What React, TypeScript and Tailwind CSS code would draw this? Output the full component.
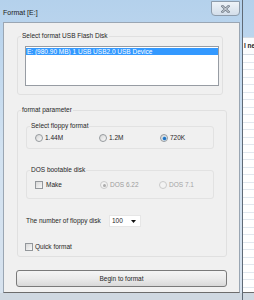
import React from "react";

function Radio({ checked = false, disabled = false }: { checked?: boolean; disabled?: boolean }) {
  return (
    <span
      className={`relative inline-block w-[8px] h-[8px] shrink-0 rounded-full border ${
        disabled
          ? "border-[#cacaca] bg-[#f3f3f3]"
          : "border-[#969a9e] bg-gradient-to-br from-[#d6d6d6] to-[#fbfbfb]"
      }`}
    >
      {checked && (
        <span
          className={`absolute left-[1.5px] top-[1.5px] w-[3px] h-[3px] rounded-full ${
            disabled ? "bg-[#ababab]" : "bg-[#1f6fbf] shadow-[0_0_0_0.5px_#5aa7e6]"
          }`}
        />
      )}
    </span>
  );
}

function Check() {
  return (
    <span className="inline-block w-[8px] h-[8px] shrink-0 border border-[#93979b] bg-gradient-to-br from-[#d8d8d8] to-[#f9f9f9]" />
  );
}

export default function App() {
  const rows = Array.from({ length: 32 });
  return (
    <div className="w-[254px] h-[300px] overflow-hidden flex bg-gradient-to-b from-[#b4d1ec] via-[#d2e2f1] to-[#d7e2ee] font-['Liberation_Sans',Arial,sans-serif] text-[6.5px] leading-[8px] text-[#262626]">
      {/* dialog */}
      <div className="w-[244px] h-full flex flex-col border-r border-[#5f6a76]">
        {/* title bar */}
        <div className="h-[22px] flex items-start justify-between pl-[3px] pr-[2px]">
          <span className="mt-[9px] text-[7px] leading-[8px] text-[#1a1a1a]">Format [E:]</span>
          <div className="w-[29px] h-[15px] mt-[1px] rounded-b-[4px] border border-[#8d9cac] bg-gradient-to-b from-[#eef3f8] to-[#d3deea] flex items-center justify-center">
            <svg width="9" height="8" viewBox="0 0 9 8">
              <path d="M1.5 1.2 L7.5 6.8 M7.5 1.2 L1.5 6.8" stroke="#6f7a87" strokeWidth="2.4" strokeLinecap="square" />
              <path d="M1.5 1.2 L7.5 6.8 M7.5 1.2 L1.5 6.8" stroke="#eef2f6" strokeWidth="0.9" strokeLinecap="square" />
            </svg>
          </div>
        </div>
        {/* body */}
        <div className="flex-1 flex pl-[3px] pr-[2px]">
          <div className="flex-1 flex flex-col bg-[#f0f0f0] border border-[#9aa6b3] border-b-[#6c6c6c] px-[12px]">
            {/* group 1 */}
            <fieldset className="mt-[9px] ml-[1px] w-[206px] border border-[#e0e0e0] rounded-[3px] px-[3px] pt-[6px] pb-[8px]">
              <legend className="px-[1px] leading-[8px]">Select format USB Flash Disk</legend>
              <div className="ml-[4px] w-[194px] h-[40px] bg-white border border-[#979ca3]">
                <div className="mt-[1px] h-[7px] leading-[7px] bg-[#3399ff] text-white pl-[1px] whitespace-nowrap">
                  E: (980.90 MB) 1 USB USB2.0 USB Device
                </div>
              </div>
            </fieldset>

            {/* group 2 */}
            <fieldset className="mt-[11px] ml-[1px] w-[210px] border border-[#e0e0e0] rounded-[3px] px-[3px] pb-[5px]">
              <legend className="px-[1px] leading-[8px]">format parameter</legend>

              <fieldset className="mt-[8px] ml-[5px] w-[188px] border border-[#e2e2e2] rounded-[3px] px-[3px] pt-[4px] pb-[6px]">
                <legend className="px-[1px] leading-[8px]">Select floppy format</legend>
                <div className="flex h-[8px] items-center pl-[5px]">
                  <div className="w-[64px] flex items-center gap-[2px]">
                    <Radio />
                    <span>1.44M</span>
                  </div>
                  <div className="w-[61px] flex items-center gap-[2px]">
                    <Radio />
                    <span>1.2M</span>
                  </div>
                  <div className="flex items-center gap-[2px]">
                    <Radio checked />
                    <span>720K</span>
                  </div>
                </div>
              </fieldset>

              <fieldset className="mt-[17px] ml-[5px] w-[188px] border border-[#e2e2e2] rounded-[3px] px-[3px] pt-[7px] pb-[9px]">
                <legend className="px-[1px] leading-[8px]">DOS bootable disk</legend>
                <div className="flex h-[8px] items-center pl-[5px]">
                  <div className="w-[65px] flex items-center gap-[3px]">
                    <Check />
                    <span>Make</span>
                  </div>
                  <div className="w-[59px] flex items-center gap-[2px] text-[#9c9c9c]">
                    <Radio checked disabled />
                    <span>DOS 6.22</span>
                  </div>
                  <div className="flex items-center gap-[2px] text-[#a4a4a4]">
                    <Radio disabled />
                    <span>DOS 7.1</span>
                  </div>
                </div>
              </fieldset>

              <div className="mt-[16px] ml-[5px] flex items-center h-[12px]">
                <span className="w-[83px] whitespace-nowrap">The number of floppy disk</span>
                <div className="w-[32px] h-[12px] bg-white border border-[#e6e6e6] flex items-center justify-between pl-[2px] pr-[4px]">
                  <span>100</span>
                  <svg width="5" height="3" viewBox="0 0 5 3">
                    <path d="M0 0 H5 L2.5 3 Z" fill="#111" />
                  </svg>
                </div>
              </div>

              <div className="mt-[16px] ml-[4px] flex items-center h-[8px] gap-[2px]">
                <Check />
                <span>Quick format</span>
              </div>
            </fieldset>

            <button className="mt-[13px] w-[211px] h-[17px] border border-[#7a7a7a] rounded-[3px] bg-gradient-to-b from-[#f5f5f5] via-[#ebebeb] to-[#d9d9d9] text-[6.5px] leading-[8px] text-[#262626] flex items-center justify-center">
              Begin to format
            </button>
          </div>
        </div>
        <div className="h-[7px] bg-[#cfd8e1]" />
      </div>

      {/* background window strip */}
      <div className="flex-1 flex flex-col">
        <div className="h-[37px]" />
        <div className="flex-1 bg-white flex flex-col border-b border-[#6c6c6c] overflow-hidden">
          <div className="h-[18px] shrink-0 border-t border-b border-[#d4dbe3] bg-[#fbfcfd] flex items-center pl-[1px] font-bold text-[#222] whitespace-nowrap">
            l ne
          </div>
          {rows.map((_, i) => (
            <div key={i} className="h-[7.5px] shrink-0 border-b border-[#e2e8ef]" />
          ))}
        </div>
        <div className="h-[7px] bg-[#cfd8e1]" />
      </div>
    </div>
  );
}
